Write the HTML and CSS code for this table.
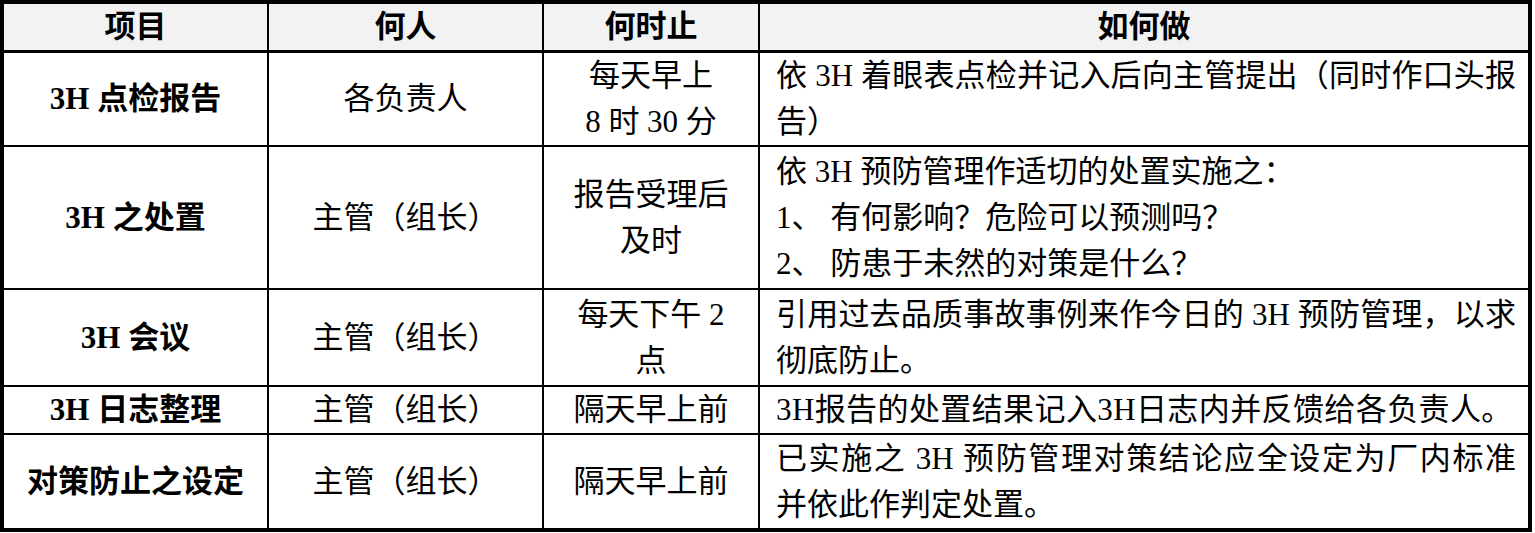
FILE: index.html
```html
<!DOCTYPE html>
<html lang="zh-CN">
<head>
<meta charset="utf-8">
<title>3H 管理</title>
<link rel="stylesheet" href="styles.css">
</head>
<body>
<table class="grid">
  <colgroup>
    <col class="c1">
    <col class="c2">
    <col class="c3">
    <col class="c4">
  </colgroup>
  <thead>
    <tr class="head">
      <th>项目</th>
      <th>何人</th>
      <th>何时止</th>
      <th>如何做</th>
    </tr>
  </thead>
  <tbody>
    <tr class="r1">
      <td class="item"><b class="lat">3H</b> 点检报告</td>
      <td class="mid">各负责人</td>
      <td class="mid">每天早上<br>8 时 30 分</td>
      <td class="how"><div class="full">依 3H 着眼表点检并记入后向主管提出（同时作口头报</div><div>告）</div></td>
    </tr>
    <tr class="r2">
      <td class="item"><b class="lat">3H</b> 之处置</td>
      <td class="mid">主管（组长）</td>
      <td class="mid">报告受理后<br>及时</td>
      <td class="how"><div>依 3H 预防管理作适切的处置实施之：</div><div>1、 有何影响？危险可以预测吗？</div><div>2、 防患于未然的对策是什么？</div></td>
    </tr>
    <tr class="r3">
      <td class="item"><b class="lat">3H</b> 会议</td>
      <td class="mid">主管（组长）</td>
      <td class="mid">每天下午 2<br>点</td>
      <td class="how"><div class="full">引用过去品质事故事例来作今日的 3H 预防管理，以求</div><div>彻底防止。</div></td>
    </tr>
    <tr class="r4">
      <td class="item"><b class="lat">3H</b> 日志整理</td>
      <td class="mid">主管（组长）</td>
      <td class="mid">隔天早上前</td>
      <td class="how"><div class="one">3H报告的处置结果记入3H日志内并反馈给各负责人。</div></td>
    </tr>
    <tr class="r5">
      <td class="item">对策防止之设定</td>
      <td class="mid">主管（组长）</td>
      <td class="mid">隔天早上前</td>
      <td class="how"><div class="full">已实施之 3H 预防管理对策结论应全设定为厂内标准</div><div>并依此作判定处置。</div></td>
    </tr>
  </tbody>
</table>
</body>
</html>
```

FILE: styles.css
```css
html, body {
  margin: 0;
  padding: 0;
  background: #ffffff;
}

body {
  font-family: "Liberation Serif", "Noto Sans CJK SC", serif;
  font-size: 31px;
  line-height: 46px;
  color: #000000;
}

.grid {
  border-collapse: collapse;
  table-layout: fixed;
  width: 1532px;
  border: 4px solid #000;
}

.c1 { width: 266px; }
.c2 { width: 275px; }
.c3 { width: 216px; }
.c4 { width: auto; }

.grid th,
.grid td {
  border: 2px solid #000;
  padding: 0;
  vertical-align: middle;
}

.head th {
  background: #f2f2f2;
  font-weight: 700;
  height: 46px;
  border-bottom: 3px solid #000;
  text-align: center;
}

.item {
  text-align: center;
  font-weight: 700;
}

.lat {
  font-weight: 700;
}

.mid {
  text-align: center;
  font-weight: 400;
}

.how {
  text-align: left;
  padding: 0 12px 0 16px !important;
}

.how .full {
  text-align: justify;
  text-align-last: justify;
}

.how .one {
  white-space: nowrap;
  letter-spacing: 0.4px;
}

.r1 td { height: 92px; }
.r2 td { height: 141px; }
.r3 td { height: 95px; }
.r4 td { height: 45px; }
.r5 td { height: 93px; }
```
